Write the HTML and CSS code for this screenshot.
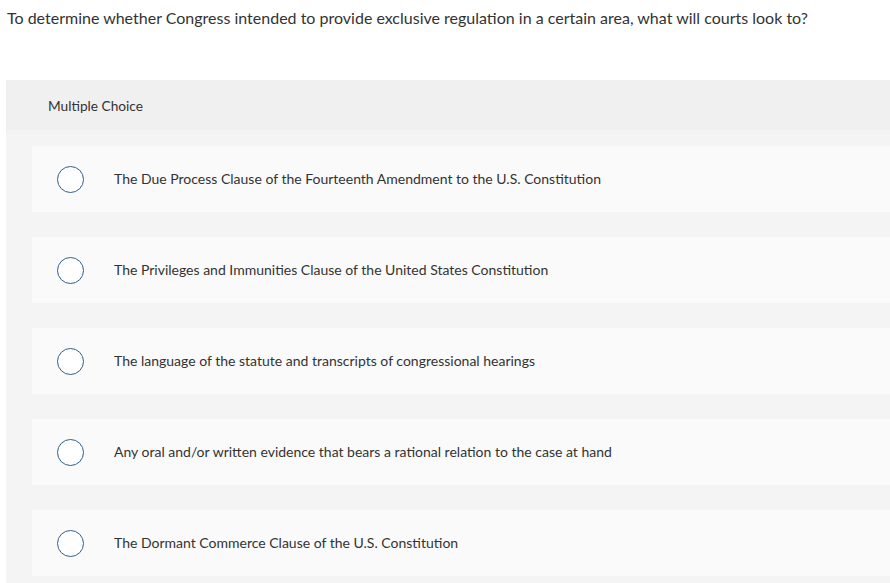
FILE: index.html
```html
<!DOCTYPE html>
<html>
<head>
<meta charset="utf-8">
<link rel="stylesheet" href="styles.css">
</head>
<body>
<p class="question">To determine whether Congress intended to provide exclusive regulation in a certain area, what will courts look to?</p>
<div class="panel">
  <div class="panel-head">Multiple Choice</div>
  <div class="options">
    <div class="option"><span class="radio"></span><span class="label">The Due Process Clause of the Fourteenth Amendment to the U.S. Constitution</span></div>
    <div class="option"><span class="radio"></span><span class="label">The Privileges and Immunities Clause of the United States Constitution</span></div>
    <div class="option"><span class="radio"></span><span class="label">The language of the statute and transcripts of congressional hearings</span></div>
    <div class="option"><span class="radio"></span><span class="label">Any oral and/or written evidence that bears a rational relation to the case at hand</span></div>
    <div class="option"><span class="radio"></span><span class="label">The Dormant Commerce Clause of the U.S. Constitution</span></div>
  </div>
</div>
</body>
</html>
```
FILE: styles.css
```css
html, body { margin: 0; padding: 0; background: #fff; }
body { font-family: "Lato", "Liberation Sans", sans-serif; color: #333; }
.question {
  margin: 0;
  padding: 9px 0 0 7px;
  font-size: 16px;
  line-height: 18px;
  height: 80px;
  box-sizing: border-box;
}
.panel {
  margin-left: 6px;
  background: #f4f4f4;
}
.panel-head {
  background: #f0f0f0;
  height: 50px;
  display: flex;
  align-items: center;
  padding-left: 42px;
  font-size: 13.7px;
  color: #333;
}
.options {
  padding: 16px 0 7px 26px;
  display: flex;
  flex-direction: column;
  gap: 25px;
}
.option {
  background: #fafafa;
  height: 66px;
  display: flex;
  align-items: center;
  padding-left: 25px;
}
.radio {
  width: 25px;
  height: 25px;
  border: 1.5px solid #2e5f8f;
  border-radius: 50%;
  background: #fff;
  flex: none;
}
.label {
  margin-left: 30px;
  padding-bottom: 1px;
  font-size: 14px;
  color: #333;
}
```
